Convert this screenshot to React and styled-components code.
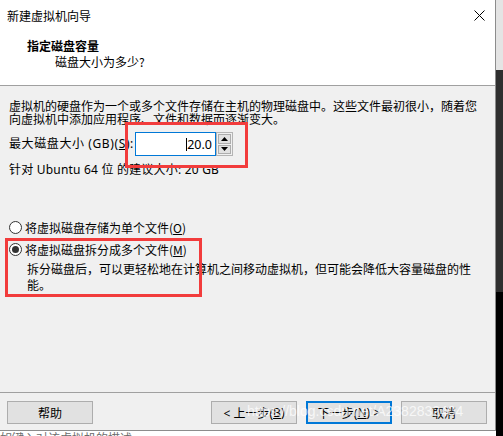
import React from "react";
import styled, { createGlobalStyle, css } from "styled-components";

const GlobalStyle = createGlobalStyle`
  html, body { margin: 0; padding: 0; }
  body {
    width: 503px; height: 436px; overflow: hidden; background: #fff;
    font-family: "Noto Sans", "Noto Sans CJK SC", sans-serif;
    font-size: 12px; color: #000;
  }
`;

const Screen = styled.div`
  display: grid;
  grid-template-columns: 496px 7px;
  grid-template-rows: 431px 5px;
  width: 503px;
  height: 436px;
  overflow: hidden;
`;

const RightStrip = styled.div`
  grid-row: 1 / 3;
  grid-column: 2;
  display: flex;
  flex-direction: column;
`;

const StripPart = styled.div`
  height: ${(p) => p.$h}px;
  flex: ${(p) => (p.$grow ? 1 : "none")};
  background: ${(p) => p.$bg};
`;

const Window = styled.div`
  position: relative;
  grid-row: 1;
  grid-column: 1;
  display: flex;
  flex-direction: column;
  background: #f0f0f0;
  border-right: 1px solid #8c8c8c;
  border-bottom: 1px solid #8c8c8c;
  box-sizing: border-box;
`;

const TitleBar = styled.div`
  height: 30px;
  display: flex;
  align-items: center;
  justify-content: space-between;
  padding: 0 10px 0 7px;
  background: #fff;
  font-family: "Noto Sans CJK SC", sans-serif;
  font-size: 12px;
`;

const Header = styled.div`
  height: 56px;
  padding: 8px 0 0 27px;
  box-sizing: border-box;
  background: #fff;
  border-bottom: 1px solid #a0a0a0;
  font-family: "Noto Sans CJK SC", sans-serif;
`;

const HeaderTitle = styled.div`
  font-weight: bold;
  line-height: 16px;
`;

const HeaderSub = styled.div`
  margin-left: 28px;
  line-height: 16px;
`;

const Body = styled.div`
  flex: 1;
  padding: 13px 0 0 9px;
  display: flex;
  flex-direction: column;
  align-items: flex-start;
`;

const Para = styled.div`
  line-height: 13px;
  white-space: nowrap;
  font-family: "Noto Sans CJK SC", sans-serif;
`;

const SizeRow = styled.div`
  margin-top: 7px;
  display: flex;
  align-items: center;
  gap: 3px;
`;

const Label = styled.span`
  width: 123px;
  white-space: nowrap;
  line-height: 14px;
  letter-spacing: 0.6px;
`;

const Key = styled.span`
  text-decoration: underline;
  text-underline-offset: 1px;
`;

const NumberBox = styled.div`
  display: flex;
  height: 24px;
`;

const Field = styled.div`
  width: 81px;
  box-sizing: border-box;
  border: 1px solid #0078d7;
  background: #fff;
  display: flex;
  align-items: center;
  justify-content: flex-end;
  padding-right: 3px;
  font-size: 12.5px;
`;

const Caret = styled.span`
  display: inline-block;
  width: 1px;
  height: 13px;
  background: #000;
`;

const Spinner = styled.div`
  width: 17px;
  box-sizing: border-box;
  border: 1px solid #b4b4b4;
  background: #f0f0f0;
  display: flex;
  flex-direction: column;
  padding: 1px;
  gap: 1px;
`;

const SpinBtn = styled.div`
  flex: 1;
  border: 1px solid #adadad;
  background: #e1e1e1;
  display: flex;
  align-items: center;
  justify-content: center;
`;

const Note = styled.div`
  margin-top: 7px;
  line-height: 14px;
  white-space: nowrap;
  letter-spacing: 0.2px;
`;

const RadioRow = styled.div`
  margin-top: ${(p) => p.$mt}px;
  display: flex;
  align-items: center;
  gap: 3px;
  height: 16px;
  font-family: "Noto Sans CJK SC", sans-serif;
  white-space: nowrap;
`;

const RadioCircle = styled.span`
  width: 13px;
  height: 13px;
  box-sizing: border-box;
  border-radius: 50%;
  border: 1px solid #333;
  background: #fff;
  display: flex;
  align-items: center;
  justify-content: center;
  &::after {
    content: "";
    width: 7px;
    height: 7px;
    border-radius: 50%;
    background: #333;
    display: ${(p) => (p.$checked ? "block" : "none")};
  }
`;

const Desc = styled.div`
  margin: 4px 0 0 18px;
  line-height: 16px;
  white-space: nowrap;
  font-family: "Noto Sans CJK SC", sans-serif;
`;

const Footer = styled.div`
  height: 38px;
  box-sizing: border-box;
  border-top: 1px solid #a0a0a0;
  padding: 8px 8px 0 7px;
  display: flex;
  align-items: flex-start;
  gap: 9px;
`;

const Button = styled.div`
  width: 86px;
  height: 23px;
  box-sizing: border-box;
  border: 1px solid #adadad;
  background: #e1e1e1;
  display: flex;
  align-items: center;
  justify-content: center;
  white-space: nowrap;
  font-family: "Noto Sans", "Noto Sans CJK SC", sans-serif;
  font-size: 12px;
  ${(p) => p.$first && css`margin-right: auto;`}
  ${(p) =>
    p.$default &&
    css`
      border: 2px solid #0078d7;
    `}
`;

const Annotation = styled.div`
  position: absolute;
  left: ${(p) => p.$x}px;
  top: ${(p) => p.$y}px;
  width: ${(p) => p.$w}px;
  height: ${(p) => p.$h}px;
  border: 3px solid #f23c3c;
  box-sizing: border-box;
  pointer-events: none;
`;

const Watermark = styled.div`
  position: absolute;
  left: 247px;
  top: 403px;
  font-family: "Liberation Sans", sans-serif;
  font-size: 14px;
  color: rgba(255, 255, 255, 0.75);
  white-space: nowrap;
  pointer-events: none;
`;

const Behind = styled.div`
  grid-row: 2;
  grid-column: 1;
  overflow: hidden;
  background: #fff;
`;

const BehindText = styled.div`
  margin-top: 1px;
  line-height: 12px;
  color: #6d6d6d;
  font-family: "Noto Sans CJK SC", sans-serif;
  white-space: nowrap;
`;

const CloseIcon = () => (
  <svg width="11" height="11" viewBox="0 0 11 11">
    <path d="M0.5 0.5 L10.5 10.5 M10.5 0.5 L0.5 10.5" stroke="#000" strokeWidth="1" fill="none" />
  </svg>
);

const Arrow = ({ up }) => (
  <svg width="7" height="4" viewBox="0 0 7 4">
    <path d={up ? "M3.5 0 L7 4 L0 4 Z" : "M0 0 L7 0 L3.5 4 Z"} fill="#000" />
  </svg>
);

export default function App() {
  return (
    <>
      <GlobalStyle />
      <Screen>
        <Window>
          <TitleBar>
            <span>新建虚拟机向导</span>
            <CloseIcon />
          </TitleBar>
          <Header>
            <HeaderTitle>指定磁盘容量</HeaderTitle>
            <HeaderSub>磁盘大小为多少?</HeaderSub>
          </Header>
          <Body>
            <Para>
              虚拟机的硬盘作为一个或多个文件存储在主机的物理磁盘中。这些文件最初很小，随着您
              <br />
              向虚拟机中添加应用程序、文件和数据而逐渐变大。
            </Para>
            <SizeRow>
              <Label>
                最大磁盘大小 (GB)(<Key>S</Key>):
              </Label>
              <NumberBox>
                <Field>
                  <Caret />
                  20.0
                </Field>
                <Spinner>
                  <SpinBtn>
                    <Arrow up />
                  </SpinBtn>
                  <SpinBtn>
                    <Arrow />
                  </SpinBtn>
                </Spinner>
              </NumberBox>
            </SizeRow>
            <Note>针对 Ubuntu 64 位 的建议大小: 20 GB</Note>
            <RadioRow $mt={42}>
              <RadioCircle />
              <span>
                将虚拟磁盘存储为单个文件(<Key>O</Key>)
              </span>
            </RadioRow>
            <RadioRow $mt={6}>
              <RadioCircle $checked />
              <span>
                将虚拟磁盘拆分成多个文件(<Key>M</Key>)
              </span>
            </RadioRow>
            <Desc>
              拆分磁盘后，可以更轻松地在计算机之间移动虚拟机，但可能会降低大容量磁盘的性
              <br />
              能。
            </Desc>
          </Body>
          <Footer>
            <Button $first>帮助</Button>
            <Button>
              &lt; 上一步(<Key>B</Key>)
            </Button>
            <Button $default>
              下一步(<Key>N</Key>) &gt;
            </Button>
            <Button>取消</Button>
          </Footer>
          <Annotation $x={125} $y={122} $w={123} $h={46} />
          <Annotation $x={5} $y={238} $w={197} $h={59} />
          <Watermark>https://blog.csdn.net/A2382832404</Watermark>
        </Window>
        <RightStrip>
          <StripPart $h={70} $bg="#e4e4e4" />
          <StripPart $h={222} $bg="#2f2f2f" />
          <StripPart $grow $bg="#000" />
        </RightStrip>
        <Behind>
          <BehindText>如键入对该虚拟机的描述</BehindText>
        </Behind>
      </Screen>
    </>
  );
}
